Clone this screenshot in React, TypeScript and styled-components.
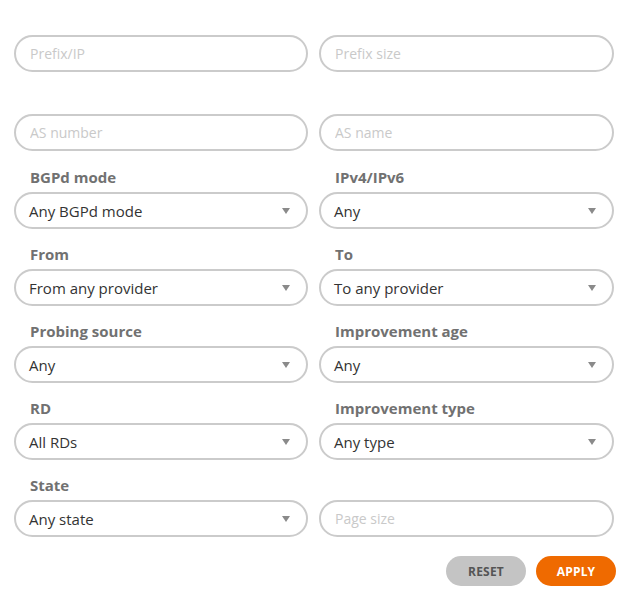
import React from 'react';
import styled, { createGlobalStyle } from 'styled-components';

const GlobalStyle = createGlobalStyle`
  body {
    margin: 0;
    background: #fff;
    font-family: "Open Sans", "Liberation Sans", sans-serif;
  }
`;

const Form = styled.div`
  width: 600px;
  padding: 7px 0 0 14px;
  display: flex;
  flex-direction: column;
`;

const Row = styled.div<{ $extra?: boolean }>`
  display: grid;
  grid-template-columns: 294px 295px;
  column-gap: 11px;
  margin-top: ${(p) => (p.$extra ? '15px' : '14px')};

  &:first-child {
    margin-top: 0;
  }
`;

const Field = styled.div`
  display: flex;
  flex-direction: column;
`;

const Label = styled.div<{ $tall?: boolean }>`
  height: ${(p) => (p.$tall ? '24px' : '22px')};
  line-height: 22px;
  margin-bottom: 4px;
  padding-left: 16px;
  font-size: 15px;
  font-weight: 700;
  color: #717171;
`;

const Input = styled.input`
  box-sizing: border-box;
  height: 37px;
  width: 100%;
  border: 2px solid #cbcbcb;
  border-radius: 19px;
  padding: 0 14px;
  font-family: inherit;
  font-size: 14px;
  color: #333;
  outline: none;
  background: #fff;

  &::placeholder {
    color: #c9c9c9;
  }
`;

const Select = styled.div`
  box-sizing: border-box;
  height: 37px;
  border: 2px solid #cbcbcb;
  border-radius: 19px;
  padding: 0 14px 0 13px;
  display: flex;
  align-items: center;
  justify-content: space-between;
  font-size: 15px;
  color: #333;
  background: #fff;
`;

const Caret = styled.span`
  width: 0;
  height: 0;
  border-left: 4.5px solid transparent;
  border-right: 4.5px solid transparent;
  border-top: 6px solid #8a8a8a;
  margin-right: 2px;
`;

const Actions = styled.div`
  display: flex;
  justify-content: flex-end;
  gap: 10px;
  margin: 19px -2px 0 0;
`;

const Button = styled.button<{ $primary?: boolean }>`
  width: 80px;
  height: 30px;
  border: none;
  border-radius: 15px;
  font-family: inherit;
  font-size: 12px;
  font-weight: 700;
  letter-spacing: 0.2px;
  text-transform: uppercase;
  background: ${(p) => (p.$primary ? '#ef6a00' : '#c4c4c4')};
  color: ${(p) => (p.$primary ? '#fff' : '#555')};
  cursor: pointer;
`;

const SelectField = ({ label, value }: { label: string; value: string }) => (
  <Field>
    <Label>{label}</Label>
    <Select>
      <span>{value}</span>
      <Caret />
    </Select>
  </Field>
);

const TextField = ({ label, placeholder, tall }: { label?: string; placeholder: string; tall?: boolean }) => (
  <Field>
    <Label $tall={tall}>{label}</Label>
    <Input placeholder={placeholder} />
  </Field>
);

export default function App() {
  return (
    <>
      <GlobalStyle />
      <Form>
        <Row>
          <TextField placeholder="Prefix/IP" tall />
          <TextField placeholder="Prefix size" tall />
        </Row>
        <Row>
          <TextField placeholder="AS number" tall />
          <TextField placeholder="AS name" tall />
        </Row>
        <Row $extra>
          <SelectField label="BGPd mode" value="Any BGPd mode" />
          <SelectField label="IPv4/IPv6" value="Any" />
        </Row>
        <Row>
          <SelectField label="From" value="From any provider" />
          <SelectField label="To" value="To any provider" />
        </Row>
        <Row>
          <SelectField label="Probing source" value="Any" />
          <SelectField label="Improvement age" value="Any" />
        </Row>
        <Row>
          <SelectField label="RD" value="All RDs" />
          <SelectField label="Improvement type" value="Any type" />
        </Row>
        <Row>
          <SelectField label="State" value="Any state" />
          <TextField placeholder="Page size" />
        </Row>
        <Actions>
          <Button>Reset</Button>
          <Button $primary>Apply</Button>
        </Actions>
      </Form>
    </>
  );
}
